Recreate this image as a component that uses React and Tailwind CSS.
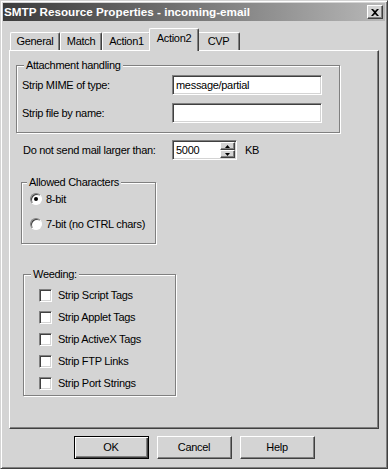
const raised = 'border border-t-white border-l-white border-r-[#404040] border-b-[#404040] shadow-[inset_-1px_-1px_0_#808080]';
const sunken = 'border border-t-[#808080] border-l-[#808080] border-r-white border-b-white shadow-[inset_1px_1px_0_#404040,inset_-1px_-1px_0_#d4d4d4]';
const group = 'border border-[#808080] shadow-[inset_1px_1px_0_#fff,1px_1px_0_#fff]';

const Tab = ({ label, width, selected }) => (
  <div
    className={
      selected
        ? `relative z-10 -mx-[2px] -mb-[1px] flex h-[23px] items-center justify-center rounded-t-[2px] border-l border-t border-r border-l-white border-t-white border-r-[#404040] bg-[#d4d4d4] pb-[3px] shadow-[inset_-1px_0_0_#808080]`
        : `flex h-[18px] items-center justify-center rounded-t-[2px] border-l border-t border-r border-l-white border-t-white border-r-[#404040] shadow-[inset_-1px_0_0_#808080]`
    }
    style={{ width: selected ? width + 4 : width }}
  >
    {label}
  </div>
);

const Checkbox = ({ label }) => (
  <div className="flex h-[16px] items-center gap-[6px]">
    <div className={`h-[13px] w-[13px] bg-white ${sunken}`} />
    <span>{label}</span>
  </div>
);

const Radio = ({ label, checked }) => (
  <div className="flex h-[16px] items-center gap-[4px]">
    <div className="flex h-[12px] w-[12px] items-center justify-center rounded-full border border-t-[#808080] border-l-[#808080] border-r-white border-b-white bg-white shadow-[inset_1px_1px_0_#404040]">
      {checked && <div className="h-[4px] w-[4px] rounded-full bg-black" />}
    </div>
    <span>{label}</span>
  </div>
);

const Button = ({ children, isDefault }) =>
  isDefault ? (
    <div className="flex h-[23px] w-[75px] items-center justify-center border border-black shadow-[inset_1px_1px_0_#fff,inset_-1px_-1px_0_#404040,inset_-2px_-2px_0_#808080]">
      {children}
    </div>
  ) : (
    <div className={`flex h-[23px] w-[75px] items-center justify-center ${raised}`}>{children}</div>
  );

export default function App() {
  return (
    <div
      className="h-[469px] w-[388px] border border-t-[#d4d4d4] border-l-[#d4d4d4] border-r-[#404040] border-b-[#404040] bg-[#d4d4d4] p-[2px] text-[11px] tracking-[-0.3px] text-black shadow-[inset_1px_1px_0_#fff,inset_-1px_-1px_0_#808080]"
      style={{ fontFamily: '"Liberation Sans", Arial, sans-serif' }}
    >
      {/* Title bar */}
      <div className="flex h-[18px] items-center justify-between bg-gradient-to-r from-[#3c3c3c] to-[#b8b8b8] pl-[1px] pr-[2px]">
        <span className="text-[11.7px] font-bold tracking-normal text-white">SMTP Resource Properties - incoming-email</span>
        <div className={`flex h-[14px] w-[16px] items-center justify-center bg-[#d4d4d4] ${raised}`}>
          <svg width="8" height="7" viewBox="0 0 8 7">
            <path d="M0 0h2l2 2 2-2h2L5 3.5 8 7H6L4 5 2 7H0l3-3.5z" fill="#000" />
          </svg>
        </div>
      </div>

      {/* Tabs */}
      <div className="ml-[7px] mt-[7px] flex items-end">
        <Tab label="General" width={50} />
        <Tab label="Match" width={42} />
        <Tab label="Action1" width={49} />
        <Tab label="Action2" width={46} selected />
        <Tab label="CVP" width={43} />
      </div>

      {/* Panel */}
      <div className="ml-[6px] flex h-[379px] w-[370px] flex-col border border-t-white border-l-white border-r-[#404040] border-b-[#404040] shadow-[inset_-1px_-1px_0_#808080]">
        <fieldset className={`ml-[6px] mt-[8px] w-[324px] pb-[9px] ${group}`}>
          <legend className="ml-[7px] bg-[#d4d4d4] px-[2px] leading-[13px]">Attachment handling</legend>
          <div className="mt-[3px] flex items-center">
            <span className="w-[155px] pl-[5px]">Strip MIME of type:</span>
            <div className={`flex h-[20px] w-[150px] items-center bg-white pl-[3px] ${sunken}`}>message/partial</div>
          </div>
          <div className="mt-[8px] flex items-center">
            <span className="w-[155px] pl-[5px]">Strip file by name:</span>
            <div className={`h-[20px] w-[150px] bg-white ${sunken}`} />
          </div>
        </fieldset>

        <div className="ml-[13px] mt-[7px] flex items-center">
          <span className="w-[149px]">Do not send mail larger than:</span>
          <div className={`flex h-[20px] w-[65px] items-center justify-between bg-white pl-[3px] pr-[1px] ${sunken}`}>
            <span>5000</span>
            <div className="flex flex-col">
              <div className={`flex h-[8px] w-[15px] items-center justify-center bg-[#d4d4d4] ${raised}`}>
                <svg width="5" height="3" viewBox="0 0 5 3"><path d="M2.5 0L5 3H0z" fill="#000" /></svg>
              </div>
              <div className={`flex h-[8px] w-[15px] items-center justify-center bg-[#d4d4d4] ${raised}`}>
                <svg width="5" height="3" viewBox="0 0 5 3"><path d="M0 0h5L2.5 3z" fill="#000" /></svg>
              </div>
            </div>
          </div>
          <span className="ml-[8px]">KB</span>
        </div>

        <fieldset className={`ml-[11px] mt-[16px] w-[135px] pb-[11px] pl-[8px] ${group}`}>
          <legend className="-ml-[3px] bg-[#d4d4d4] px-[2px] leading-[13px]">Allowed Characters</legend>
          <div className="mt-[2px] flex flex-col gap-[9px]">
            <Radio label="8-bit" checked />
            <Radio label="7-bit (no CTRL chars)" />
          </div>
        </fieldset>

        <fieldset className={`ml-[13px] mt-[24px] w-[153px] pb-[4px] pl-[15px] ${group}`}>
          <legend className="-ml-[8px] bg-[#d4d4d4] px-[2px] leading-[13px]">Weeding:</legend>
          <div className="mt-[6px] flex flex-col gap-[6px]">
            <Checkbox label="Strip Script Tags" />
            <Checkbox label="Strip Applet Tags" />
            <Checkbox label="Strip ActiveX Tags" />
            <Checkbox label="Strip FTP Links" />
            <Checkbox label="Strip Port Strings" />
          </div>
        </fieldset>
      </div>

      {/* Buttons */}
      <div className="mt-[7px] flex justify-center gap-[8px]">
        <Button isDefault>OK</Button>
        <Button>Cancel</Button>
        <Button>Help</Button>
      </div>
    </div>
  );
}
